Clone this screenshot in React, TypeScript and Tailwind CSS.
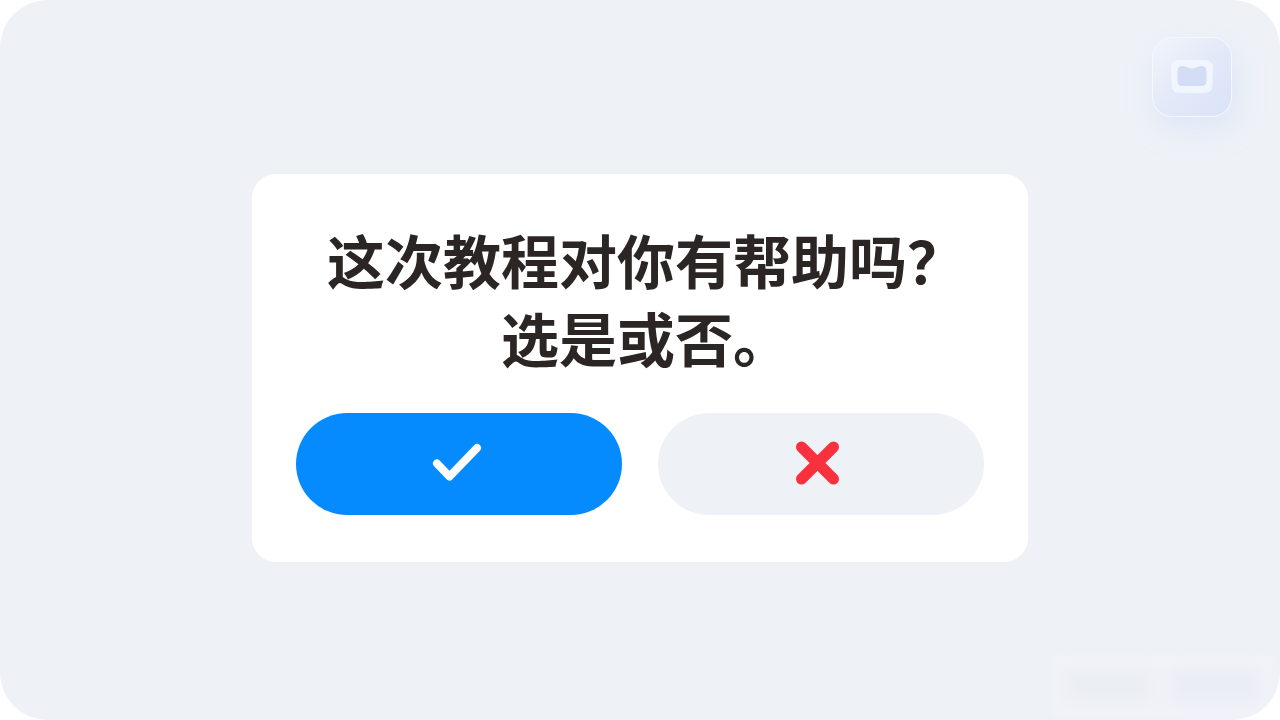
import React, { useState } from 'react';

type Answer = 'yes' | 'no' | null;

const CameraBadge: React.FC = () => (
  <div className="absolute top-[37px] right-12 w-20 h-20 flex items-center justify-center rounded-[20px] border border-[#f5f8ff] bg-linear-to-br from-[#f1f4fa] via-[#e3e9f8] to-[#dae2f8] shadow-[4px_12px_28px_rgba(200,213,246,0.4)]">
    <svg width="46" height="38" viewBox="0 0 46 38" fill="none" aria-hidden="true">
      <path
        d="M11 2H35C42 2 44.500 5 44 11L43.500 26C43 33 41 35 34 35H12C5 35 3 33 2.500 26L2 11C1.500 5 4 2 11 2Z"
        fill="#f0f5fe"
      />
      <path
        d="M14 8C10 8 8.500 10 8.500 14V22C8.500 26 10 28 14 28H32C36 28 37.500 26 37.500 22V14C37.500 10 36 8 32 8C28.500 8 27 10.500 23 10.500C19 10.500 17.500 8 14 8Z"
        fill="#d3ddf5"
      />
    </svg>
  </div>
);

// Frosted patch in the lower right corner
const FrostedMark: React.FC = () => (
  <div className="absolute right-2 bottom-1 w-[220px] h-[60px] flex gap-4 p-3 bg-[#f1f3f9] blur-[3px]">
    <div className="flex-1 bg-[#ebeef3] blur-[6px]" />
    <div className="flex-1 bg-[#eaedf3] blur-[6px]" />
  </div>
);

const App: React.FC = () => {
  const [answer, setAnswer] = useState<Answer>(null);

  return (
    <div className="min-h-screen bg-white flex font-['Noto_Sans_CJK_SC',sans-serif]">
      <main className="relative flex-1 flex items-center justify-center overflow-hidden rounded-[48px] bg-[#eef2f7] px-6 pt-4">
        <CameraBadge />
        <FrostedMark />

        <section className="relative w-full max-w-[776px] rounded-3xl bg-white px-11 pt-[46px] pb-[47px]">
          <h1 lang="zh-CN" className="pl-3 text-center text-[58px] leading-[78px] font-bold text-[#2b2523]">
            这次教程对你有帮助吗？
            <br />
            选是或否。
          </h1>

          <div className="mt-[37px] grid grid-cols-2 gap-9">
            <button
              type="button"
              aria-label="是"
              aria-pressed={answer === 'yes'}
              onClick={() => setAnswer('yes')}
              className="h-[102px] flex items-center justify-center rounded-full bg-[#068bff] hover:bg-[#007ff0] transition-colors"
            >
              <svg width="56" height="48" viewBox="0 0 56 48" fill="none" aria-hidden="true">
                <path d="M6 23.500L18.500 36.500L46 8" stroke="#fff" strokeWidth="8" strokeLinecap="round" strokeLinejoin="round" />
              </svg>
            </button>
            <button
              type="button"
              aria-label="否"
              aria-pressed={answer === 'no'}
              onClick={() => setAnswer('no')}
              className="h-[102px] flex items-center justify-center rounded-full bg-[#eef2f7] hover:bg-[#e5eaf1] transition-colors"
            >
              <svg width="56" height="48" viewBox="0 0 56 48" fill="none" aria-hidden="true">
                <path d="M8.500 7L40.500 39M40.500 7L8.500 39" stroke="#f9303d" strokeWidth="11" strokeLinecap="round" />
              </svg>
            </button>
          </div>
        </section>
      </main>
    </div>
  );
};

export default App;
